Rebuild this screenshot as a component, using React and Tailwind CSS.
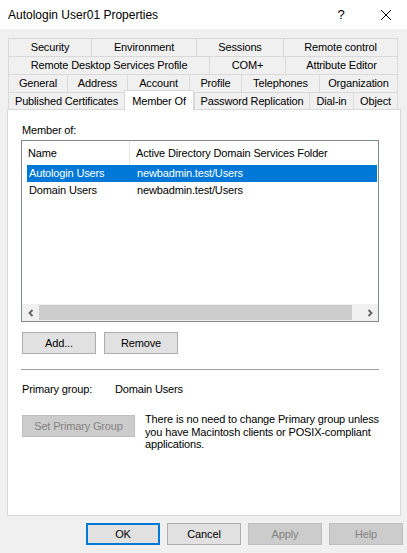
import React from 'react';

const font = { fontFamily: '"Liberation Sans", Arial, sans-serif' };

const rows = [
  [
    ['Security', 'w-[83px]'],
    ['Environment', 'w-[105px]'],
    ['Sessions', 'w-[87px]'],
    ['Remote control', 'w-[115px]'],
  ],
  [
    ['Remote Desktop Services Profile', 'w-[201px]'],
    ['COM+', 'w-[76px]'],
    ['Attribute Editor', 'w-[113px]'],
  ],
  [
    ['General', 'w-[59px]'],
    ['Address', 'w-[60px]'],
    ['Account', 'w-[62px]'],
    ['Profile', 'w-[52px]'],
    ['Telephones', 'w-[78px]'],
    ['Organization', 'w-[79px]'],
  ],
];

const lastRow = [
  ['Published Certificates', 'w-[116px]'],
  ['Member Of', 'w-[70px]', true],
  ['Password Replication', 'w-[115px]'],
  ['Dial-in', 'w-[44px]'],
  ['Object', 'w-[45px]'],
];

function Tab({ label, width, last }) {
  return (
    <div
      className={`${width} h-[18px] flex items-center justify-center bg-[#f0f0f0] border-t border-l border-[#d9d9d9] ${last ? 'border-r' : ''} whitespace-nowrap`}
    >
      {label}
    </div>
  );
}

function Button({ children, className = '', disabled, primary }) {
  let look = 'bg-[#e1e1e1] border border-[#adadad] text-black';
  if (disabled) look = 'bg-[#cccccc] border border-[#bfbfbf] text-[#838383]';
  if (primary) look = 'bg-[#e1e1e1] border-2 border-[#0078d7] text-black';
  return (
    <div className={`h-[22px] flex items-center justify-center ${look} ${className}`}>
      {children}
    </div>
  );
}

function Chevron({ dir }) {
  return (
    <svg width="8" height="8" viewBox="0 0 8 8">
      <path
        d={dir === 'left' ? 'M5.5 1 L2.5 4 L5.5 7' : 'M2.5 1 L5.5 4 L2.5 7'}
        fill="none"
        stroke="#606060"
        strokeWidth="1.8"
      />
    </svg>
  );
}

export default function App() {
  return (
    <div className="w-[407px] h-[553px] bg-[#f0f0f0] flex flex-col text-[11px] tracking-[-0.15px] text-black" style={font}>
      {/* title bar */}
      <div className="h-[29px] bg-white flex items-center pl-[8px] shrink-0 tracking-normal">
        <span className="text-[12px] flex-1">Autologin User01 Properties</span>
        <span className="text-[13px] w-[12px] mr-[33px] text-center">?</span>
        <svg width="12" height="12" viewBox="0 0 12 12" className="mr-[15px]">
          <path d="M1 1 L11 11 M11 1 L1 11" stroke="#000" strokeWidth="1" />
        </svg>
      </div>

      {/* tabs */}
      <div className="mt-[9px] pl-[8px] flex flex-col">
        {rows.map((row, i) => (
          <div key={i} className="flex">
            {row.map(([label, w], j) => (
              <Tab key={label} label={label} width={w} last={j === row.length - 1} />
            ))}
          </div>
        ))}
        <div className="flex items-end h-[20px] -mt-[2px]">
          {lastRow.map(([label, w, sel], j) =>
            sel ? (
              <div
                key={label}
                className={`${w} h-[21px] -mb-[1px] relative z-10 bg-white border-t border-l border-r border-[#d9d9d9] flex items-start justify-center pt-[2px] whitespace-nowrap`}
              >
                {label}
              </div>
            ) : (
              <Tab key={label} label={label} width={w} last={j === lastRow.length - 1} />
            )
          )}
        </div>
      </div>

      {/* panel */}
      <div className="ml-[7px] w-[394px] h-[407px] -mt-[1px] bg-white border border-[#d9d9d9] flex flex-col pl-[13px] pr-[21px]">
        <div className="mt-[14px] pl-[1px] leading-[13px]">Member of:</div>

        <div className="mt-[3px] h-[182px] border border-[#828790] flex flex-col">
          <div className="h-[24px] flex items-stretch shrink-0">
            <div className="w-[108px] pl-[6px] flex items-center border-r border-[#e5e5e5]">Name</div>
            <div className="pl-[6px] flex items-center whitespace-nowrap">Active Directory Domain Services Folder</div>
          </div>
          <div className="pl-[5px] pr-[1px]">
            <div className="h-[17px] bg-[#0078d7] text-white flex items-center">
              <div className="w-[110px] pl-[2px]">Autologin Users</div>
              <div>newbadmin.test/Users</div>
            </div>
            <div className="h-[16px] flex items-center">
              <div className="w-[110px] pl-[2px]">Domain Users</div>
              <div>newbadmin.test/Users</div>
            </div>
          </div>
          <div className="flex-1" />
          <div className="h-[17px] bg-[#f0f0f0] flex items-center shrink-0">
            <div className="w-[17px] h-[17px] flex items-center justify-center">
              <Chevron dir="left" />
            </div>
            <div className="w-[313px] h-[15px] bg-[#cdcdcd]" />
            <div className="flex-1" />
            <div className="w-[17px] h-[17px] flex items-center justify-center">
              <Chevron dir="right" />
            </div>
          </div>
        </div>

        <div className="mt-[10px] flex gap-[8px] pl-[1px]">
          <Button className="w-[74px]">Add...</Button>
          <Button className="w-[74px]">Remove</Button>
        </div>

        <div className="mt-[15px] h-px bg-[#a0a0a0]" />

        <div className="mt-[13px] flex pl-[1px] leading-[13px]">
          <div className="w-[93px]">Primary group:</div>
          <div>Domain Users</div>
        </div>

        <div className="mt-[19px] flex pl-[1px]">
          <Button disabled className="w-[113px] shrink-0">Set Primary Group</Button>
          <div className="ml-[10px] -mt-[2px] leading-[12.5px] whitespace-nowrap">
            There is no need to change Primary group unless
            <br />
            you have Macintosh clients or POSIX-compliant
            <br />
            applications.
          </div>
        </div>
      </div>

      {/* bottom buttons */}
      <div className="mt-[7px] pl-[86px] flex gap-[7px]">
        <Button primary className="w-[74px]">OK</Button>
        <Button className="w-[74px]">Cancel</Button>
        <Button disabled className="w-[74px]">Apply</Button>
        <Button disabled className="w-[74px]">Help</Button>
      </div>
    </div>
  );
}
